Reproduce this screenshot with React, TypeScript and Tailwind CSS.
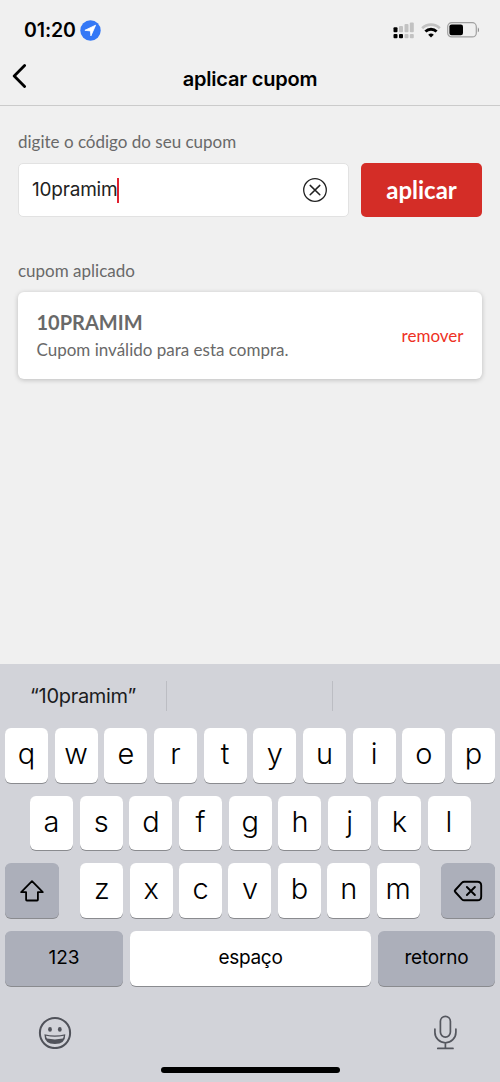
import type { ReactNode } from 'react';

const TOP_ROW = ['q', 'w', 'e', 'r', 't', 'y', 'u', 'i', 'o', 'p'];
const HOME_ROW = ['a', 's', 'd', 'f', 'g', 'h', 'j', 'k', 'l'];
const BOTTOM_ROW = ['z', 'x', 'c', 'v', 'b', 'n', 'm'];

function StatusBar() {
  return (
    <div className="flex h-[53px] items-center justify-between pl-[24px] pr-[20px] pt-[7px]">
      <div className="flex items-center gap-[4px]">
        <span className="text-[19.5px] leading-6 font-semibold tracking-[-0.1px] text-black">01:20</span>
        <svg width="21" height="21" viewBox="0 0 21 21">
          <circle cx="10.5" cy="10.5" r="10.2" fill="#3478f6" />
          <path d="M15.6 5.2 10.9 15.9 10.4 10.9 4.9 10.3Z" fill="#fff" stroke="#fff" strokeWidth="0.8" strokeLinejoin="round" />
        </svg>
      </div>
      <div className="flex items-center gap-[6px]">
        {/* dual SIM signal: bars above, second line as dots */}
        <svg width="22" height="17" viewBox="0 0 22 17">
          <g fill="#000">
            <rect x="0.5" y="5.3" width="4" height="5" rx="1" />
            <rect x="0.5" y="12" width="4" height="4.2" rx="1" />
            <rect x="6" y="12" width="4" height="4.2" rx="1" />
          </g>
          <g fill="#c2c2c2">
            <rect x="6" y="4" width="4" height="6.3" rx="1" />
            <rect x="11.5" y="2" width="4" height="8.3" rx="1" />
            <rect x="16.8" y="0.4" width="4" height="9.9" rx="1" />
            <rect x="11.5" y="12" width="4" height="4.2" rx="1" />
            <rect x="16.8" y="12" width="4" height="4.2" rx="1" />
          </g>
        </svg>
        <svg width="20" height="15" viewBox="0 0 20 15" fill="none">
          <path d="M1.2 5.2a12.4 12.4 0 0 1 17.6 0" stroke="#c2c2c2" strokeWidth="2.7" />
          <path d="M4.4 8.6a7.9 7.9 0 0 1 11.2 0" stroke="#000" strokeWidth="2.8" />
          <path d="M10 14.6 7.2 11.8a4 4 0 0 1 5.6 0Z" fill="#000" />
        </svg>
        <svg width="33" height="16" viewBox="0 0 33 16">
          <rect x="0.7" y="0.7" width="28.6" height="14.2" rx="4" fill="none" stroke="#a0a0a0" strokeWidth="1.2" />
          <rect x="2.4" y="2.4" width="13.6" height="10.8" rx="2.2" fill="#000" />
          <path d="M30.8 5.4c1.6.6 1.6 4.2 0 4.8Z" fill="#8e8e8e" />
        </svg>
      </div>
    </div>
  );
}

function NavBar() {
  return (
    <header className="grid h-[53px] grid-cols-[60px_1fr_60px] items-center border-b border-[#cbcbcb]">
      <svg className="mb-[6px] ml-[12px]" width="15" height="24" viewBox="0 0 15 24" fill="none">
        <path d="M12.6 1.5 2.2 12l10.4 10.5" stroke="#000" strokeWidth="2.8" strokeLinecap="round" strokeLinejoin="round" />
      </svg>
      <h1 className="text-center text-[20px] font-semibold tracking-[-0.2px] text-black">aplicar cupom</h1>
    </header>
  );
}

function Key({ children }: { children: ReactNode }) {
  return (
    <button className="flex h-[54.5px] w-[43px] justify-center rounded-[6px] bg-white pt-[6px] text-[29px] leading-[40px] font-light text-black shadow-[0_1px_0_#8a8b8f]">
      {children}
    </button>
  );
}

function Keyboard() {
  return (
    <section className="h-[418px] bg-[#d2d3d9]">
      <div className="flex h-[64px] items-center">
        <div className="w-[166px] text-center text-[20px] tracking-[-0.3px] text-[#1b1b1d]">“10pramim”</div>
        <div className="h-[30px] w-[167px] border-x border-[#bcbdc3]" />
      </div>

      <div className="flex flex-col gap-[13.2px] px-[5px]">
        <div className="flex justify-between">
          {TOP_ROW.map((letter) => (
            <Key key={letter}>{letter}</Key>
          ))}
        </div>
        <div className="flex justify-between pl-[25px] pr-[24.5px]">
          {HOME_ROW.map((letter) => (
            <Key key={letter}>{letter}</Key>
          ))}
        </div>
        <div className="flex justify-between">
          <button className="flex h-[54.5px] w-[54px] items-center justify-center rounded-[6px] bg-[#acafba] shadow-[0_1px_0_#8a8b8f]">
            <svg width="26" height="24" viewBox="0 0 26 24" fill="none">
              <path d="M13 2.2 23.8 13.2h-4.9v7.5q0 .8-.8.8H7.9q-.8 0-.8-.8v-7.5H2.2Z" stroke="#000" strokeWidth="1.8" strokeLinejoin="round" />
            </svg>
          </button>
          <div className="flex w-[339.5px] justify-between">
            {BOTTOM_ROW.map((letter) => (
              <Key key={letter}>{letter}</Key>
            ))}
          </div>
          <button className="flex h-[54.5px] w-[54px] items-center justify-center rounded-[6px] bg-[#acafba] shadow-[0_1px_0_#8a8b8f]">
            <svg width="30" height="24" viewBox="0 0 30 24" fill="none" stroke="#000" strokeWidth="1.9" strokeLinecap="round" strokeLinejoin="round">
              <path d="M11.2 2.7h13.2q3.8 0 3.8 3.8v11q0 3.8-3.8 3.8H11.2q-1.3 0-2.2-.9L2.3 13q-1-1 0-2L9 3.6q.9-.9 2.2-.9Z" />
              <path d="m13.9 8 8 8M21.9 8l-8 8" />
            </svg>
          </button>
        </div>
        <div className="flex justify-between">
          <button className="h-[54.5px] w-[118px] rounded-[6px] bg-[#acafba] text-[19px] text-black shadow-[0_1px_0_#8a8b8f]">123</button>
          <button className="h-[54.5px] w-[240.5px] rounded-[6px] bg-white text-[19px] tracking-[-0.3px] text-black shadow-[0_1px_0_#8a8b8f]">espaço</button>
          <button className="h-[54.5px] w-[117px] rounded-[6px] bg-[#acafba] text-[19px] tracking-[-0.2px] text-black shadow-[0_1px_0_#8a8b8f]">retorno</button>
        </div>
      </div>

      <div className="flex justify-between pl-[38px] pr-[42px] pt-[29px]">
        <svg width="34" height="34" viewBox="0 0 34 34" fill="none">
          <circle cx="17" cy="18" r="15.1" stroke="#50525a" strokeWidth="2" />
          <ellipse cx="12" cy="14.4" rx="1.9" ry="2.4" fill="#50525a" />
          <ellipse cx="21.8" cy="14.4" rx="1.9" ry="2.4" fill="#50525a" />
          <path d="M6.4 19.2q10.5 2.6 20.9 0 .2 9.8-10.4 9.8T6.4 19.2Z" fill="#50525a" />
          <path d="M8 20.8q9 2 17.8 0-.1 1.8-1 2.8-8 1.6-15.8 0-.9-1-1-2.8Z" fill="#d2d3d9" />
        </svg>
        <svg width="25" height="36" viewBox="0 0 25 36" fill="none" stroke="#54565e" strokeWidth="1.7" strokeLinecap="round">
          <rect x="7.4" y="1.3" width="10" height="20.8" rx="5" />
          <path d="M1.9 14v3.3a10.5 10.5 0 0 0 21 0V14M12.4 27.8v5.6M4.8 33.4h15.2" />
        </svg>
      </div>
      <div className="mx-auto mt-[16px] h-[6px] w-[179px] rounded-full bg-black" />
    </section>
  );
}

export default function App() {
  return (
    <div className="flex h-[1082px] w-[500px] flex-col overflow-hidden bg-[#f0f0f0] font-['Inter',sans-serif]">
      <StatusBar />
      <NavBar />

      <main className="flex-1 px-[18px] pt-[25px] font-['Lato',sans-serif] text-[#696969]">
        <label className="block text-[17px] leading-[22px]">digite o código do seu cupom</label>
        <div className="mt-[10px] flex gap-[12px]">
          <div className="flex h-[54px] flex-1 items-center justify-between rounded-[5px] border border-[#e2e2e2] bg-white pl-[13px] pr-[20px]">
            <div className="flex items-center font-['Inter',sans-serif] text-[19px] text-[#222]">
              <span className="tracking-[-0.2px]">10pramim</span>
              <span className="h-[25px] w-[2px] bg-[#e0202f]" />
            </div>
            <svg width="26" height="26" viewBox="0 0 26 26" fill="none" stroke="#222" strokeLinecap="round">
              <circle cx="13" cy="13" r="11.3" strokeWidth="1.3" />
              <path d="m8.2 8.4 9.6 9.4M17.8 8.4l-9.6 9.4" strokeWidth="1.5" />
            </svg>
          </div>
          <button className="h-[54px] w-[121px] rounded-[5px] bg-[#d42d27] text-[24px] font-bold text-white">aplicar</button>
        </div>

        <h2 className="mt-[43px] text-[17px] leading-[22px]">cupom aplicado</h2>
        <div className="mt-[10px] flex h-[87px] items-center justify-between rounded-[6px] bg-white px-[18.5px] shadow-[0_1px_5px_rgba(0,0,0,0.22)]">
          <div className="flex flex-col">
            <strong className="text-[20px] leading-[28px] font-bold">10PRAMIM</strong>
            <span className="text-[17px] leading-[28px]">Cupom inválido para esta compra.</span>
          </div>
          <button className="text-[17px] text-[#ee3124]">remover</button>
        </div>
      </main>

      <Keyboard />
    </div>
  );
}
